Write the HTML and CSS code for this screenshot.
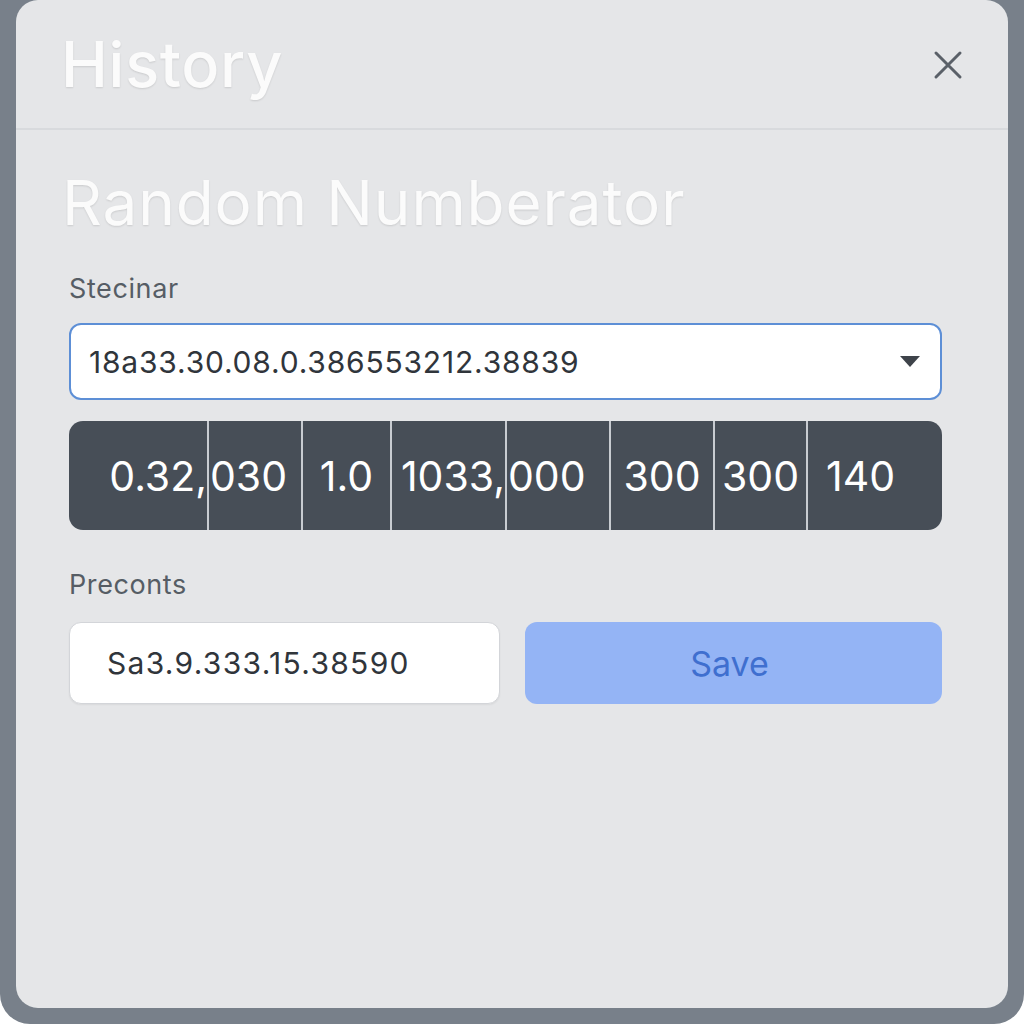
FILE: index.html
```html
<!DOCTYPE html>
<html>
<head>
<meta charset="utf-8">
<link rel="stylesheet" href="styles.css">
</head>
<body>
<div class="frame">
  <div class="panel">
    <header class="header">
      <h1 class="title">History</h1>
      <button class="close" aria-label="Close">
        <svg width="30" height="30" viewBox="0 0 30 30"><path d="M3 3 L27 27 M27 3 L3 27" stroke="#5a6068" stroke-width="3" stroke-linecap="round" fill="none"/></svg>
      </button>
    </header>
    <main class="content">
      <h2 class="heading">Random Numberator</h2>
      <div class="label label-first">Stecinar</div>
      <div class="select">
        <span class="select-text">18a33.30.08.0.386553212.38839</span>
        <svg class="caret" width="20" height="12" viewBox="0 0 20 12"><path d="M0 0 H20 L10 11 Z" fill="#3e434a"/></svg>
      </div>
      <div class="numbers">
        <div class="cell c1">0.32,</div>
        <div class="cell c2">030</div>
        <div class="cell c3">1.0</div>
        <div class="cell c4">1033,</div>
        <div class="cell c5">000</div>
        <div class="cell c6">300</div>
        <div class="cell c7">300</div>
        <div class="cell c8">140</div>
      </div>
      <div class="label label-second">Preconts</div>
      <div class="row">
        <div class="input">Sa3.9.333.15.38590</div>
        <button class="save">Save</button>
      </div>
    </main>
  </div>
</div>
</body>
</html>
```

FILE: styles.css
```css
* { box-sizing: border-box; }
html, body { margin: 0; padding: 0; background: #ffffff; }
body { font-family: Inter, "Noto Sans", "Liberation Sans", sans-serif; }

.frame {
  width: 1024px;
  height: 1024px;
  background: #78808a;
  border-radius: 0 0 30px 30px;
  padding: 0 16px 16px 16px;
}

.panel {
  height: 1008px;
  background: #e5e6e8;
  border-radius: 22px;
  display: flex;
  flex-direction: column;
}

.header {
  height: 130px;
  border-bottom: 2px solid #d8dadd;
  display: flex;
  align-items: center;
  justify-content: space-between;
  padding: 0 45px 0 45px;
}

.title {
  margin: 0;
  font-size: 63px;
  font-weight: 500;
  color: #fbfbfb;
  letter-spacing: 0.7px;
  text-shadow: 0 1px 2px rgba(0,0,0,0.12);
  line-height: 1;
}

.close {
  border: 0;
  background: none;
  padding: 0;
  width: 30px;
  height: 30px;
  margin-top: 2px;
  display: flex;
}

.content {
  padding: 0 66px 0 53px;
  display: flex;
  flex-direction: column;
}

.heading {
  margin: 41px 0 0 -7px;
  font-size: 62px;
  font-weight: 400;
  line-height: 64px;
  color: #fbfbfb;
  letter-spacing: 0.9px;
  text-shadow: 0 1px 2px rgba(0,0,0,0.12);
}

.label {
  font-size: 27px;
  color: #565d65;
  line-height: 32px;
  letter-spacing: 0.6px;
}
.label-first { margin-top: 38px; }
.label-second { margin-top: 39px; }

.select {
  margin-top: 18px;
  height: 77px;
  background: #ffffff;
  border: 2px solid #5d8fd6;
  border-radius: 12px;
  display: flex;
  align-items: center;
  justify-content: space-between;
  padding: 0 20px 0 18px;
}
.select-text {
  font-size: 30px;
  letter-spacing: 0.8px;
  color: #30353b;
}

.numbers {
  margin-top: 21px;
  height: 109px;
  background: #474e57;
  border-radius: 14px;
  display: grid;
  grid-template-columns: 138px 94px 89px 115px 104px 104px 93px 1fr;
  color: #ffffff;
  font-size: 41px;
  overflow: hidden;
}
.cell {
  display: flex;
  align-items: center;
  border-left: 2px solid #c8ccd1;
  white-space: nowrap;
}
.c1 { border-left: 0; justify-content: flex-end; padding-right: 0; }
.c2 { padding-left: 1px; }
.c3 { justify-content: center; }
.c4 { justify-content: flex-end; }
.c5 { padding-left: 1px; }
.c6 { justify-content: center; }
.c7 { justify-content: center; }
.c8 { padding-left: 18px; }

.row {
  margin-top: 21px;
  display: grid;
  grid-template-columns: 431px 1fr;
  column-gap: 25px;
}
.input {
  height: 82px;
  background: #ffffff;
  border: 1px solid #d3d5d9;
  border-radius: 12px;
  box-shadow: 0 1px 2px rgba(0,0,0,0.06);
  display: flex;
  align-items: center;
  padding-left: 37px;
  font-size: 30px;
  letter-spacing: 1.3px;
  color: #30353b;
}
.save {
  height: 82px;
  border: 0;
  border-radius: 12px;
  background: #94b4f5;
  color: #3f6fcf;
  font-family: inherit;
  font-size: 34px;
  font-weight: 400;
  padding: 0 8px 0 0;
}
```
